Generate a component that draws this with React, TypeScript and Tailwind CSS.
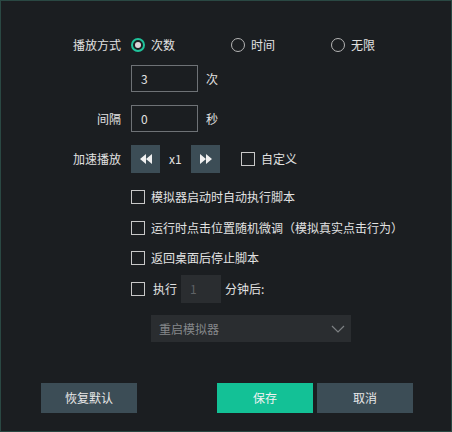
import React from "react";

const font = { fontFamily: '"Noto Sans CJK SC", "Noto Sans", sans-serif' };

function Radio({ checked, label }: { checked?: boolean; label: string }) {
  return (
    <div className="flex items-center gap-[6px]">
      {checked ? (
        <span className="flex h-[14px] w-[14px] items-center justify-center rounded-full border-2 border-[#1fc39b]">
          <span className="h-[6px] w-[6px] rounded-full bg-[#dcd3d8]" />
        </span>
      ) : (
        <span className="h-[14px] w-[14px] rounded-full border border-[#b5b5b5]" />
      )}
      <span>{label}</span>
    </div>
  );
}

function Check({ label }: { label: string }) {
  return (
    <div className="flex h-[20px] items-center gap-[6px]">
      <span className="h-[14px] w-[14px] border border-[#c8c8c8]" />
      <span>{label}</span>
    </div>
  );
}

function Label({ text }: { text: string }) {
  return <div className="w-[130px] shrink-0 pr-[10px] text-right">{text}</div>;
}

export default function App() {
  return (
    <div
      className="flex h-[432px] w-[452px] flex-col border border-[#2a4843] bg-[#1b1e21] pt-[34px] text-[12px] text-[#e2e2e2]"
      style={font}
    >
      <div className="flex h-[20px] items-center">
        <Label text="播放方式" />
        <div className="w-[100px]">
          <Radio checked label="次数" />
        </div>
        <div className="w-[100px]">
          <Radio label="时间" />
        </div>
        <Radio label="无限" />
      </div>

      <div className="mt-[10px] flex items-center">
        <div className="w-[130px] shrink-0" />
        <div className="flex h-[27px] w-[67px] items-center border border-[#6e7276] pl-[9px]">3</div>
        <span className="ml-[8px]">次</span>
      </div>

      <div className="mt-[13px] flex items-center">
        <Label text="间隔" />
        <div className="flex h-[27px] w-[67px] items-center border border-[#6e7276] pl-[9px]">0</div>
        <span className="ml-[8px]">秒</span>
      </div>

      <div className="mt-[13px] flex items-center">
        <Label text="加速播放" />
        <div className="flex h-[28px] w-[29px] items-center justify-center bg-[#3c4d56]">
          <svg width="12" height="10" viewBox="0 0 12 10">
            <path d="M6 0 L0 5 L6 10 Z M12 0 L6 5 L12 10 Z" fill="#f0f0f0" />
          </svg>
        </div>
        <span className="ml-[9px] w-[22px]">x1</span>
        <div className="flex h-[28px] w-[29px] items-center justify-center bg-[#3c4d56]">
          <svg width="12" height="10" viewBox="0 0 12 10">
            <path d="M0 0 L6 5 L0 10 Z M6 0 L12 5 L6 10 Z" fill="#f0f0f0" />
          </svg>
        </div>
        <div className="ml-[21px]">
          <Check label="自定义" />
        </div>
      </div>

      <div className="mt-[14px] pl-[130px]">
        <Check label="模拟器启动时自动执行脚本" />
      </div>
      <div className="mt-[11px] pl-[130px]">
        <Check label="运行时点击位置随机微调（模拟真实点击行为）" />
      </div>
      <div className="mt-[10px] pl-[130px]">
        <Check label="返回桌面后停止脚本" />
      </div>

      <div className="mt-[7px] flex items-center pl-[130px]">
        <span className="h-[14px] w-[14px] border border-[#c8c8c8]" />
        <span className="ml-[8px]">执行</span>
        <div className="ml-[4px] flex h-[28px] w-[40px] items-center bg-[#2a2d30] pl-[9px] text-[#5f6266]">1</div>
        <span className="ml-[4px]">分钟后:</span>
      </div>

      <div className="mt-[12px] pl-[150px]">
        <div className="flex h-[27px] w-[200px] items-center justify-between bg-[#2a2d30] pl-[8px] pr-[6px] text-[#85888b]">
          <span>重启模拟器</span>
          <svg width="14" height="8" viewBox="0 0 14 8">
            <path d="M1 1 L7 7 L13 1" stroke="#7d8083" strokeWidth="1.2" fill="none" />
          </svg>
        </div>
      </div>

      <div className="mt-[41px] flex pl-[40px]">
        <button className="h-[30px] w-[96px] bg-[#3c4d56] text-[#e8e8e8]">恢复默认</button>
        <button className="ml-[80px] h-[30px] w-[96px] bg-[#13c196] text-[#f2f2f2]">保存</button>
        <button className="ml-[4px] h-[30px] w-[96px] bg-[#3c4d56] text-[#e8e8e8]">取消</button>
      </div>
    </div>
  );
}
